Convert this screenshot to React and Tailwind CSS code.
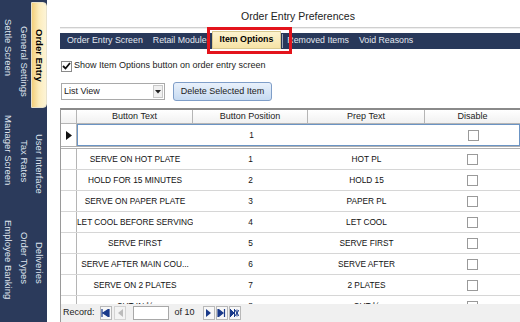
import React from "react";

const rows = [
  ["SERVE ON HOT PLATE", "1", "HOT PL"],
  ["HOLD FOR 15 MINUTES", "2", "HOLD 15"],
  ["SERVE ON PAPER PLATE", "3", "PAPER PL"],
  ["LET COOL BEFORE SERVING", "4", "LET COOL"],
  ["SERVE FIRST", "5", "SERVE FIRST"],
  ["SERVE AFTER MAIN COU...", "6", "SERVE AFTER"],
  ["SERVE ON 2 PLATES", "7", "2 PLATES"],
  ["CUT IN ½", "8", "CUT  ½"],
];

const SideTab = ({ label, h, active }) => (
  <div className={`flex items-center justify-center ${h} ${active ? "bg-gradient-to-r from-[#f3cf7a] via-[#fcecbc] to-[#fdf4d6] border border-[#e8e2cc] rounded-r-sm" : ""}`}>
    <span className={`[writing-mode:vertical-rl] whitespace-nowrap text-[9.5px] ${active ? "font-bold text-black" : "text-[#dfe4ee]"}`}>
      {label}
    </span>
  </div>
);

const Box = () => <div className="w-[11px] h-[11px] border border-[#9a9a9a] bg-white mx-auto" />;

const NavBtn = ({ children, dim }) => (
  <div className={`w-[12px] h-[14px] flex items-center justify-center border border-[#b8b8b8] bg-[#f7f7f7] ${dim ? "opacity-50" : ""}`}>
    <svg width="9" height="8" viewBox="0 0 9 8">{children}</svg>
  </div>
);

export default function App() {
  return (
    <div className="w-[520px] h-[322px] flex overflow-hidden bg-white text-[#222]" style={{ fontFamily: '"Liberation Sans", Arial, sans-serif' }}>
      {/* vertical tab strip */}
      <div className="w-[47px] h-full flex bg-[#2b3a5b] shrink-0">
        <div className="w-[16px] flex flex-col">
          <SideTab label="Settle Screen" h="h-[96px]" />
          <SideTab label="Manager Screen" h="h-[108px]" />
          <SideTab label="Employee Banking" h="h-[112px]" />
        </div>
        <div className="w-[15px] flex flex-col">
          <SideTab label="General Settings" h="h-[122px]" />
          <SideTab label="Tax Rates" h="h-[78px]" />
          <SideTab label="Order Types" h="h-[116px]" />
        </div>
        <div className="w-[16px] flex flex-col pt-[2px]">
          <SideTab label="Order Entry" h="h-[106px]" active />
          <SideTab label="User Interface" h="h-[112px]" />
          <SideTab label="Deliveries" h="h-[86px]" />
        </div>
      </div>

      <div className="flex-1 flex flex-col pl-[13px] relative">
        <div className="h-[27px] flex items-center justify-center pt-[6px] pl-[16px] text-[10.5px] text-[#222]">Order Entry Preferences</div>
        <div className="h-[2px] bg-[#cfcfcf] border-b border-[#eeeeee]" />
        <div className="h-[4px]" />
        <div className="h-[16px] bg-[#28385a] flex items-center text-[8.8px] text-[#e4e8f0] pl-[7px]">
          <span>Order Entry Screen</span>
          <span className="ml-[10px]">Retail Module</span>
          <span className="w-px h-[14px] bg-[#9aa4b8] ml-[1px]" />
          <span className="ml-[3px] h-[18px] -mt-[2px] px-[7px] flex items-center bg-gradient-to-b from-[#fdf3cf] to-[#f6e3a6] border border-[#d9c98f] text-black font-bold">Item Options</span>
          <span className="w-px h-[14px] bg-[#9aa4b8] ml-[1px]" />
          <span className="ml-[4px]">Removed Items</span>
          <span className="ml-[10px]">Void Reasons</span>
        </div>
        {/* red highlight annotation */}
        <div className="absolute left-[160px] top-[27px] w-[85px] h-[27px] border-[3px] border-[#e3141c]" />

        <div className="h-[11px]" />
        <div className="h-[12px] flex items-center pl-[1px] text-[9px]">
          <div className="w-[11px] h-[11px] border border-[#8a8a8a] bg-white flex items-center justify-center">
            <svg width="9" height="8" viewBox="0 0 9 8"><path d="M1 4 L3.5 6.5 L8 1" stroke="#111" strokeWidth="1.8" fill="none" /></svg>
          </div>
          <span className="ml-[2px]">Show Item Options button on order entry screen</span>
        </div>
        <div className="h-[10px]" />
        <div className="h-[19px] flex items-center pl-[1px]">
          <div className="w-[104px] h-[17px] border border-[#a9a9a9] bg-white flex items-center justify-between text-[9px] pl-[2px] pr-[1px]">
            <span>List View</span>
            <div className="w-[10px] h-[13px] bg-[#f0f0f0] border border-[#c8c8c8] flex items-center justify-center">
              <svg width="6" height="4" viewBox="0 0 6 4"><path d="M0 0 H6 L3 3.5Z" fill="#222" /></svg>
            </div>
          </div>
          <div className="ml-[8px] w-[99px] h-[19px] rounded-[3px] border border-[#7f9ec8] bg-gradient-to-b from-[#e9f1fb] to-[#c6daf1] flex items-center justify-center text-[9px]">Delete Selected Item</div>
        </div>
        <div className="h-[7px]" />

        {/* datasheet */}
        <div className="flex-1 flex flex-col border-t-2 border-[#8a8a8a] border-l border-l-[#9a9a9a] min-h-0 text-[8.3px] text-[#111]">
          <div className="h-[14px] grid grid-cols-[16px_116px_115px_117px_95px] bg-gradient-to-b from-white to-[#f1f1f1] border-b border-[#b5b5b5] text-[9px] text-[#222]">
            <div className="border-r border-[#b5b5b5]" />
            <div className="border-r border-[#b5b5b5] text-center leading-[13px]">Button Text</div>
            <div className="border-r border-[#b5b5b5] text-center leading-[13px]">Button Position</div>
            <div className="border-r border-[#b5b5b5] text-center leading-[13px]">Prep Text</div>
            <div className="text-center leading-[13px]">Disable</div>
          </div>
          <div className="h-[22px] grid grid-cols-[16px_116px_115px_117px_95px] items-center">
            <div className="h-full border-r border-[#b5b5b5] flex items-center justify-center">
              <svg width="6" height="9" viewBox="0 0 6 9"><path d="M0 0 L6 4.5 L0 9Z" fill="#111" /></svg>
            </div>
            <div className="col-span-4 h-full border border-[#6b94c4] grid grid-cols-[116px_115px_117px_94px] items-center">
              <div />
              <div className="text-center">1</div>
              <div />
              <Box />
            </div>
          </div>
          <div className="h-[3px] border-t border-b border-[#b0b0b0]" />
          <div className="flex-1 overflow-hidden">
            {rows.map((r, i) => (
              <div key={i} className="h-[21px] grid grid-cols-[16px_116px_115px_117px_95px] items-center border-b border-[#d6d6d6]">
                <div className="h-full border-r border-[#b5b5b5] bg-white" />
                <div className="text-center whitespace-nowrap overflow-hidden">{r[0]}</div>
                <div className="text-center">{r[1]}</div>
                <div className="text-center">{r[2]}</div>
                <Box />
              </div>
            ))}
          </div>
          <div className="h-[18px] shrink-0 bg-[#f0f0f0] flex items-center pl-[2px] text-[9px] text-[#222]">
            <span>Record:</span>
            <div className="ml-[5px]"><NavBtn><path d="M1 0 V8 M2 4 L8 0 V8Z" stroke="#1a3a8a" strokeWidth="1.2" fill="#1a3a8a" /></NavBtn></div>
            <div className="ml-[2px]"><NavBtn dim><path d="M3 4 L8 0 V8Z" fill="#888" /></NavBtn></div>
            <div className="ml-[7px] w-[36px] h-[14px] bg-white border border-[#a8a8a8]" />
            <span className="ml-[6px]">of 10</span>
            <div className="ml-[8px]"><NavBtn><path d="M2 0 L7 4 L2 8Z" fill="#1a3a8a" /></NavBtn></div>
            <div className="ml-[1px]"><NavBtn><path d="M1 0 L6 4 L1 8Z M7.5 0 V8" stroke="#1a3a8a" strokeWidth="1.2" fill="#1a3a8a" /></NavBtn></div>
            <div className="ml-[1px]"><NavBtn><path d="M0 0 L4 4 L0 8Z M4.5 0 V8 M5 1 L9 7 M9 1 L5 7 M7 0.5 V7.5" stroke="#1a3a8a" strokeWidth="1" fill="#1a3a8a" /></NavBtn></div>
          </div>
        </div>
      </div>
    </div>
  );
}
